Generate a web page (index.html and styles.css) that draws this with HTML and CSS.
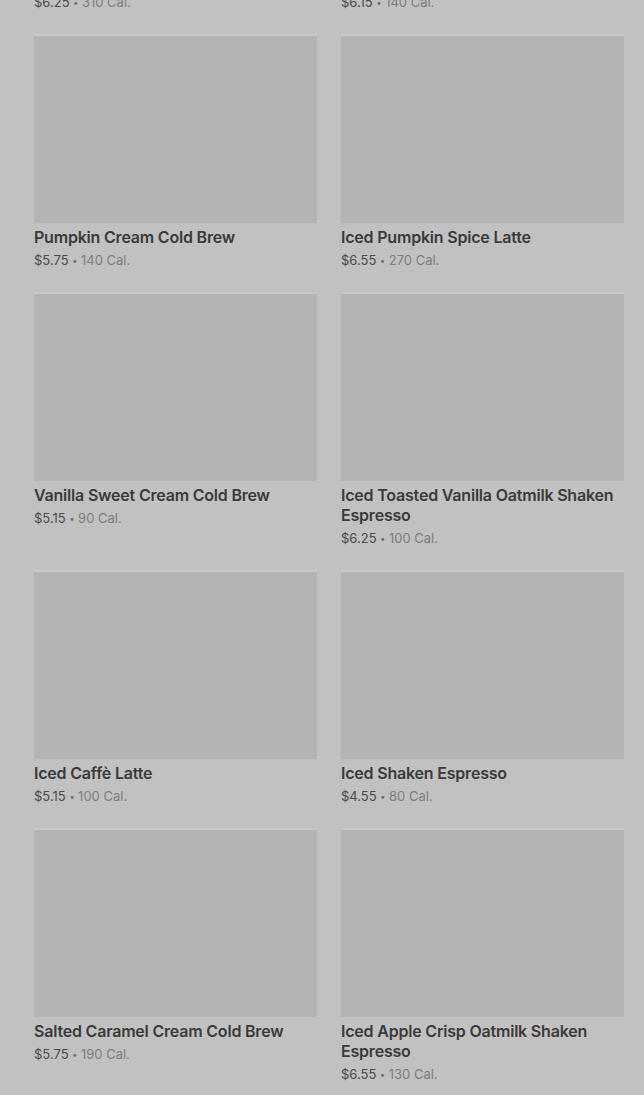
FILE: index.html
```html
<!DOCTYPE html>
<html lang="en">
<head>
  <meta charset="UTF-8">
  <title>Menu</title>
  <link rel="stylesheet" href="styles.css">
</head>
<body>

  <div class="menu">
    <div class="item">
      <div class="photo"></div>
      <h3>Iced Brown Sugar Oatmilk Shaken Espresso</h3>
      <p class="meta"><span class="price">$6.25</span> <span class="dot">•</span> <span class="cal">310 Cal.</span></p>
    </div>
    <div class="item">
      <div class="photo"></div>
      <h3>Iced Chai Tea Latte</h3>
      <p class="meta"><span class="price">$6.15</span> <span class="dot">•</span> <span class="cal">140 Cal.</span></p>
    </div>

    <div class="item">
      <div class="photo"></div>
      <h3>Pumpkin Cream Cold Brew</h3>
      <p class="meta"><span class="price">$5.75</span> <span class="dot">•</span> <span class="cal">140 Cal.</span></p>
    </div>
    <div class="item">
      <div class="photo"></div>
      <h3>Iced Pumpkin Spice Latte</h3>
      <p class="meta"><span class="price">$6.55</span> <span class="dot">•</span> <span class="cal">270 Cal.</span></p>
    </div>

    <div class="item">
      <div class="photo"></div>
      <h3>Vanilla Sweet Cream Cold Brew</h3>
      <p class="meta"><span class="price">$5.15</span> <span class="dot">•</span> <span class="cal">90 Cal.</span></p>
    </div>
    <div class="item">
      <div class="photo"></div>
      <h3>Iced Toasted Vanilla Oatmilk Shaken Espresso</h3>
      <p class="meta"><span class="price">$6.25</span> <span class="dot">•</span> <span class="cal">100 Cal.</span></p>
    </div>

    <div class="item">
      <div class="photo"></div>
      <h3>Iced Caffè Latte</h3>
      <p class="meta"><span class="price">$5.15</span> <span class="dot">•</span> <span class="cal">100 Cal.</span></p>
    </div>
    <div class="item">
      <div class="photo"></div>
      <h3>Iced Shaken Espresso</h3>
      <p class="meta"><span class="price">$4.55</span> <span class="dot">•</span> <span class="cal">80 Cal.</span></p>
    </div>

    <div class="item">
      <div class="photo"></div>
      <h3>Salted Caramel Cream Cold Brew</h3>
      <p class="meta"><span class="price">$5.75</span> <span class="dot">•</span> <span class="cal">190 Cal.</span></p>
    </div>
    <div class="item">
      <div class="photo"></div>
      <h3>Iced Apple Crisp Oatmilk Shaken Espresso</h3>
      <p class="meta"><span class="price">$6.55</span> <span class="dot">•</span> <span class="cal">130 Cal.</span></p>
    </div>
  </div>

</body>
</html>
```

FILE: styles.css
```css
html, body {
  background-color: #c1c1c1;
}

body {
  font-family: Inter, 'Noto Sans', sans-serif;
  margin: 0;
  padding: 0;
  overflow: hidden;
}

.menu {
  display: grid;
  grid-template-columns: 283px 283px;
  column-gap: 24px;
  row-gap: 22px;
  padding: 0 20px 0 34px;
  margin-top: -224px;
}

.item:first-child h3,
.item:nth-child(2) h3 {
  white-space: nowrap;
  overflow: hidden;
}

.photo {
  height: 189px;
  background-color: #b3b3b3;
  border-top: 2px solid #c7c7c7;
  box-sizing: border-box;
}

.item h3 {
  margin: 4px 0 0;
  font-size: 16px;
  line-height: 20px;
  font-weight: 600;
  color: #3a3a3a;
  letter-spacing: -0.2px;
}

.meta {
  margin: 3px 0 0;
  font-size: 13px;
  line-height: 20px;
  height: 20px;
  color: #4a4a4a;
}

.dot {
  font-size: 9px;
  line-height: 1;
  vertical-align: 1px;
  color: #6a6a6a;
}

.cal {
  color: #7d7d7d;
}
```
